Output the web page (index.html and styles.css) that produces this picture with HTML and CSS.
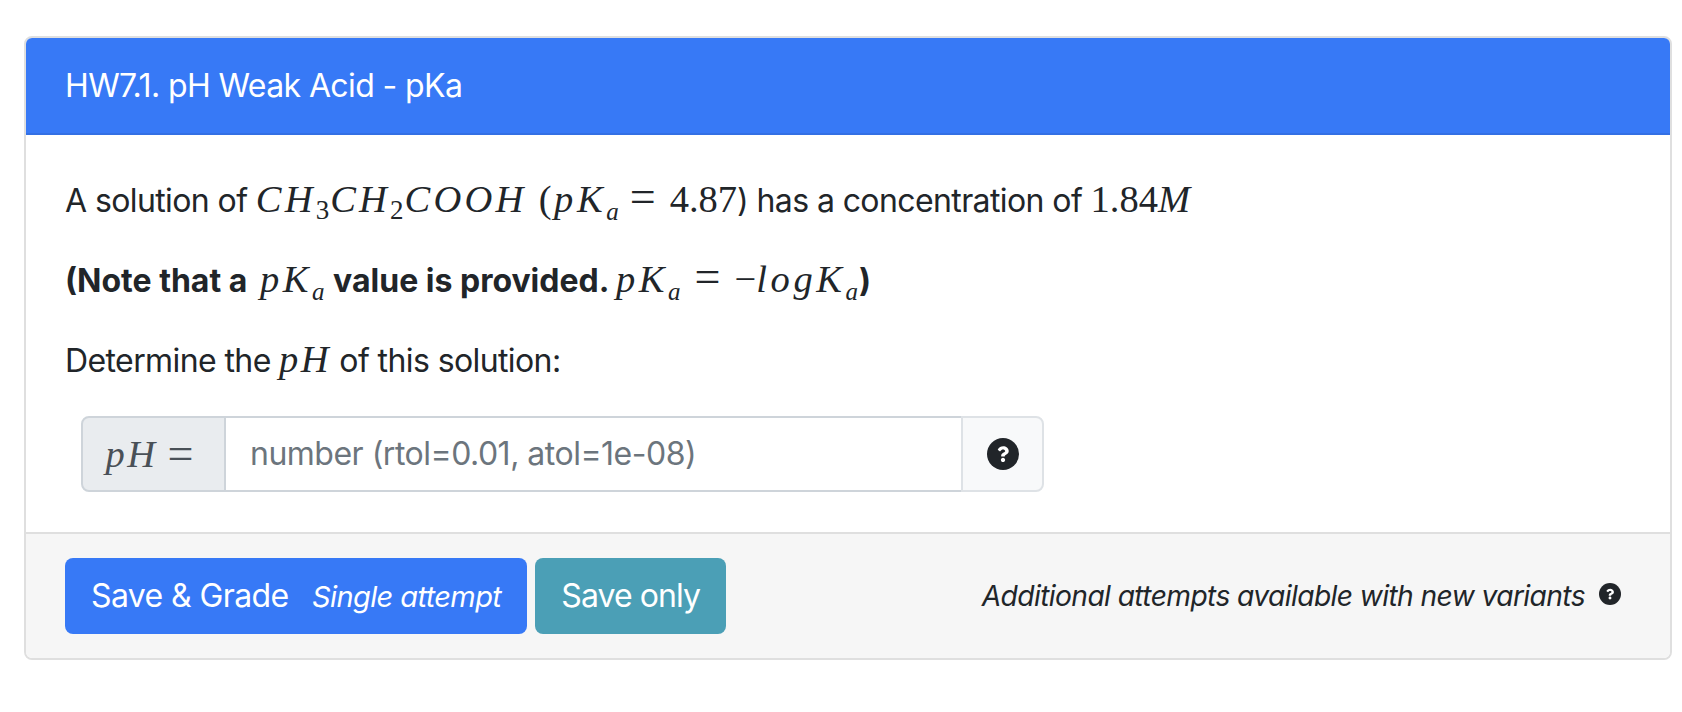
FILE: index.html
```html
<!DOCTYPE html>
<html lang="en">
<head>
<meta charset="utf-8">
<title>HW7.1. pH Weak Acid - pKa</title>
<link rel="stylesheet" href="styles.css">
</head>
<body>
<div class="card">
  <div class="card-header">HW7.1. pH Weak Acid - pKa</div>
  <div class="card-body">
    <p>A solution of <span class="m m-chem"><i>CH</i><sub>3</sub><i>CH</i><sub>2</sub><i>COOH</i></span> <span class="m">(<i class="pk">pK</i><sub class="sa"><i>a</i></sub><span class="eq">=</span><span class="num">4.87</span></span>) has a concentration of <span class="m"><span class="num">1.84</span><i>M</i></span></p>
    <p class="note">(Note that a <span class="m m-first"><i class="pk">pK</i><sub class="sa"><i>a</i></sub></span> value is provided. <span class="m"><i class="pk">pK</i><sub class="sa"><i>a</i></sub><span class="eq">=</span><span class="minus">−</span><i class="pk">logK</i><sub class="sa"><i>a</i></sub></span>)</p>
    <p class="prompt">Determine the <span class="m"><i>pH</i></span> of this solution:</p>
    <div class="input-group">
      <span class="addon-left m"><i>pH</i><span class="eq">=</span></span>
      <input class="field" type="text" placeholder="number (rtol=0.01, atol=1e-08)">
      <span class="addon-right">
        <svg class="help" viewBox="8 8 496 496" aria-hidden="true"><circle cx="256" cy="256" r="248"/><path class="qm" d="M262.655 90c-54.497 0-89.255 22.957-116.549 63.758-3.536 5.286-2.353 12.415 2.715 16.258l34.699 26.31c5.205 3.947 12.621 3.008 16.665-2.122 17.864-22.658 30.113-35.797 57.303-35.797 20.429 0 45.698 13.148 45.698 32.958 0 14.976-12.363 22.667-32.534 33.976C247.128 238.528 216 254.941 216 296v4c0 6.627 5.373 12 12 12h56c6.627 0 12-5.373 12-12v-1.333c0-28.462 83.186-29.647 83.186-106.667 0-58.002-60.165-102-116.531-102zM256 338c-25.365 0-46 20.635-46 46 0 25.364 20.635 46 46 46s46-20.636 46-46c0-25.365-20.635-46-46-46z"/></svg>
      </span>
    </div>
  </div>
  <div class="card-footer">
    <button class="btn btn-primary">Save &amp; Grade <small>Single attempt</small></button>
    <button class="btn btn-info">Save only</button>
    <span class="attempts"><em>Additional attempts available with new variants</em>
      <svg class="help-small" viewBox="8 8 496 496" aria-hidden="true"><circle cx="256" cy="256" r="248"/><path class="qm" d="M262.655 90c-54.497 0-89.255 22.957-116.549 63.758-3.536 5.286-2.353 12.415 2.715 16.258l34.699 26.31c5.205 3.947 12.621 3.008 16.665-2.122 17.864-22.658 30.113-35.797 57.303-35.797 20.429 0 45.698 13.148 45.698 32.958 0 14.976-12.363 22.667-32.534 33.976C247.128 238.528 216 254.941 216 296v4c0 6.627 5.373 12 12 12h56c6.627 0 12-5.373 12-12v-1.333c0-28.462 83.186-29.647 83.186-106.667 0-58.002-60.165-102-116.531-102zM256 338c-25.365 0-46 20.635-46 46 0 25.364 20.635 46 46 46s46-20.636 46-46c0-25.365-20.635-46-46-46z"/></svg>
    </span>
  </div>
</div>
</body>
</html>
```
FILE: styles.css
```css
* { box-sizing: border-box; }
html, body { margin: 0; background: #fff; }
body {
  padding: 36px 10px 0 24px;
  font-family: "Inter", "Liberation Sans", sans-serif;
  font-size: 32px;
  line-height: 48px;
  letter-spacing: -0.6px;
  color: #212529;
}
.card {
  border: 2px solid #dfdfdf;
  border-radius: 8px;
  overflow: hidden;
}
.card-header {
  background: #3779f6;
  color: #fff;
  padding: 24px 39px 24px;
  height: 97px;
  border-bottom: 2px solid #3370e4;
}
.card-body { padding: 42px 39px 40px; }
p { margin: 0 0 32px; white-space: nowrap; height: 48px; }
.prompt { margin-bottom: 31px; }
.note { font-weight: 700; letter-spacing: 0; }
.m {
  font-family: "Liberation Serif", serif;
  font-size: 38.5px;
  font-weight: 400;
  line-height: 0;
  letter-spacing: 2.4px;
}
.m sub { font-size: 27px; line-height: 0; vertical-align: -7px; letter-spacing: 1px; }
.m .sa { font-size: 25px; vertical-align: -8px; }
.m-chem { letter-spacing: 3.2px; margin-right: 4px; }
.m-first { margin-left: 5px; }
.pk { letter-spacing: 3.6px; }
.num { letter-spacing: 0; }
.eq { font-size: 46px; margin: 0 14px 0 10px; letter-spacing: 0; }
.note .eq { margin-left: 13px; }
.minus { letter-spacing: 0; }
.input-group {
  display: flex;
  height: 76px;
  width: 963px;
  margin-left: 16px;
}
.addon-left {
  width: 145px;
  flex: none;
  display: flex;
  align-items: center;
  justify-content: center;
  padding-left: 6px;
  background: #e9ecef;
  border: 2px solid #ced4da;
  border-radius: 8px 0 0 8px;
  color: #495057;
}
.field {
  flex: 1;
  min-width: 0;
  border: 2px solid #ced4da;
  border-left: 0;
  border-right: 0;
  padding: 0 24px;
  font: inherit;
  letter-spacing: -0.5px;
  outline: none;
  background: #fff;
}
.field::placeholder { color: #6c757d; opacity: 1; }
.addon-right {
  width: 83px;
  flex: none;
  display: flex;
  align-items: center;
  justify-content: center;
  background: #f8f9fa;
  border: 2px solid #dee2e6;
  border-radius: 0 8px 8px 0;
}
.help, .help-small { fill: #212529; }
.help { width: 32px; height: 32px; }
.qm {
  fill: #fff;
  transform-origin: 256px 256px;
  transform: scale(.72);
}
.card-footer {
  display: flex;
  align-items: center;
  gap: 8px;
  background: #f6f6f6;
  border-top: 2px solid #dfdfdf;
  padding: 24px 39px 24px;
}
.btn {
  height: 76px;
  border: 0;
  border-radius: 8px;
  padding: 0 26px;
  color: #fff;
  font: inherit;
  letter-spacing: inherit;
  white-space: nowrap;
}
.btn small { font-size: 29px; font-style: italic; margin-left: 15px; letter-spacing: -0.6px; }
.btn-primary { background: #3779f6; }
.btn-info { background: #4b9fb6; letter-spacing: -0.9px; }
.attempts {
  margin-left: auto;
  display: flex;
  align-items: center;
  gap: 14px;
  font-size: 28.2px;
  padding-right: 10px;
}
.help-small { width: 22px; height: 22px; margin-top: -4px; }
```
